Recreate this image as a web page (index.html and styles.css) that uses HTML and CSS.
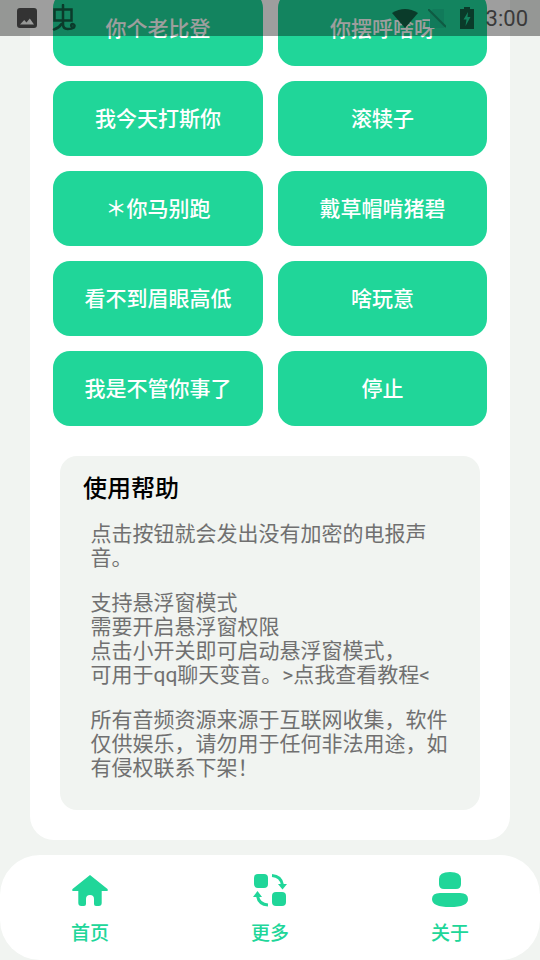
FILE: index.html
```html
<!DOCTYPE html>
<html lang="zh">
<head>
<meta charset="utf-8">
<title>电报音</title>
<link rel="stylesheet" href="styles.css">
</head>
<body>
<div class="screen">
  <main class="scroller">
    <section class="card">
      <div class="grid">
        <button class="btn">你个老比登</button>
        <button class="btn">你摆呼啥呀</button>
        <button class="btn">我今天打斯你</button>
        <button class="btn">滚犊子</button>
        <button class="btn">＊你马别跑</button>
        <button class="btn">戴草帽啃猪碧</button>
        <button class="btn">看不到眉眼高低</button>
        <button class="btn">啥玩意</button>
        <button class="btn">我是不管你事了</button>
        <button class="btn">停止</button>
      </div>
      <div class="help">
        <h2 class="help-title">使用帮助</h2>
        <p class="help-text">点击按钮就会发出没有加密的电报声<br>音。</p>
        <p class="help-text">支持悬浮窗模式<br>需要开启悬浮窗权限<br>点击小开关即可启动悬浮窗模式，<br>可用于qq聊天变音。&gt;点我查看教程&lt;</p>
        <p class="help-text">所有音频资源来源于互联网收集，软件<br>仅供娱乐，请勿用于任何非法用途，如<br>有侵权联系下架！</p>
      </div>
    </section>
  </main>
  <nav class="tabbar">
    <div class="tab">
      <svg class="tab-icon" viewBox="0 0 40 40"><path d="M20 4 L37.500 18 Q38.500 20 36.500 20 H31.700 V32 Q31.700 35 28.700 35 H26 Q24 35 24 33 V28 Q24 24 20 24 Q16 24 16 28 V33 Q16 35 14 35 H11.300 Q8.300 35 8.300 32 V20 H3.500 Q1.500 20 2.500 18 Z"/></svg>
      <span class="tab-label">首页</span>
    </div>
    <div class="tab">
      <svg class="tab-icon" viewBox="0 0 40 40"><rect x="4" y="3" width="14" height="14" rx="4"/><rect x="22" y="21" width="14" height="14" rx="4"/><path class="arrow" d="M22 4.500 Q31 5 32.500 14"/><path d="M28 13 H37 L32.500 18.500 Z"/><path class="arrow" d="M18 34 Q9 33.500 7.500 25"/><path d="M3 26 H12 L7.500 20 Z"/></svg>
      <span class="tab-label">更多</span>
    </div>
    <div class="tab">
      <svg class="tab-icon" viewBox="0 0 40 40"><path d="M9 8 Q9 1 20 1 Q31 1 31 8 V13 Q31 18 26 18 H14 Q9 18 9 13 Z"/><path d="M2 28 Q2 22 10 22 H30 Q38 22 38 28 Q38 36 20 36 Q2 36 2 28 Z"/></svg>
      <span class="tab-label">关于</span>
    </div>
  </nav>
  <header class="status">
    <div class="status-left">
      <svg class="pic" viewBox="0 0 20 20"><path d="M3 0 H17 Q20 0 20 3 V17 Q20 20 17 20 H3 Q0 20 0 17 V3 Q0 0 3 0 Z M3 16.500 H17 L12.800 10.500 L9.500 14.500 L7.200 12 Z" fill-rule="evenodd"/></svg>
      <svg class="bug" viewBox="0 0 24 28"><path d="M2.500 5.500 H19.500 V16.500 H2.500 Z M11 1 V20 Q11 25 15.500 25 Q20 25 22 23.500 Q23.500 20.500 20.500 20 Q18.500 20.500 19.500 22.500 M2 25.500 Q7 24 9.500 20" fill="none" stroke-width="2.500" stroke-linecap="round"/></svg>
    </div>
    <div class="status-right">
      <svg class="wifi" viewBox="0 0 26 20"><path d="M0 5 Q13 -3 26 5 L13 20 Z"/></svg>
      <svg class="nosim" viewBox="0 0 18 19"><path class="faint" d="M5 0 H16 V19 H2 V4 Z"/><path class="slash" d="M0 0 L18 18"/></svg>
      <svg class="batt" viewBox="0 0 14 22"><path fill-rule="evenodd" d="M4 0 H10 V2 H14 V22 H0 V2 H4 Z M8 5 L3.500 12.500 H6.500 L5.500 19 L10.500 10 H7.500 Z"/></svg>
      <span class="clock">3:00</span>
    </div>
  </header>
</div>
</body>
</html>
```
FILE: styles.css
```css
* { box-sizing: border-box; }
html, body { margin: 0; padding: 0; }
body {
  font-family: "Noto Sans CJK SC", "Noto Sans", sans-serif;
  background: #f1f4f1;
}
.screen {
  position: relative;
  width: 540px;
  height: 960px;
  overflow: hidden;
  background: #f1f4f1;
}
.scroller {
  height: 855px;
  padding: 0 30px 15px;
  display: flex;
  flex-direction: column;
  justify-content: flex-end;
  overflow: hidden;
}
.card {
  flex: none;
  background: #fff;
  border-radius: 24px;
  padding: 30px 23px 30px;
}
.grid {
  display: grid;
  grid-template-columns: 210px 209px;
  column-gap: 15px;
  row-gap: 15px;
}
.btn {
  height: 75px;
  border: 0;
  padding: 0 0 3px;
  border-radius: 17px;
  background: #20d699;
  color: #fff;
  font-family: inherit;
  font-size: 21px;
  font-weight: 500;
}
.help {
  margin: 30px 7px 0;
  padding: 13px 30px 27px 31px;
  background: #f1f4f1;
  border-radius: 17px;
  height: 354px;
}
.help-title {
  margin: 0 0 17px -8px;
  font-size: 24px;
  line-height: 36px;
  font-weight: 500;
  color: #000;
}
.help-text {
  margin: 0 0 21px -0.500px;
  font-family: Roboto, "Noto Sans CJK SC", sans-serif;
  font-size: 21px;
  line-height: 24px;
  color: #707070;
  white-space: nowrap;
}
.tabbar {
  height: 105px;
  background: #fff;
  border-radius: 40px;
  display: grid;
  grid-template-columns: repeat(3, 180px);
}
.tab {
  display: flex;
  flex-direction: column;
  align-items: center;
  padding-top: 16px;
}
.tab-icon {
  width: 40px;
  height: 40px;
  fill: #20d699;
}
.arrow {
  fill: none;
  stroke: #20d699;
  stroke-width: 3;
}
.tab-label {
  margin-top: 6px;
  font-size: 19px;
  line-height: 30px;
  font-weight: 500;
  color: #20d699;
}
.status {
  position: absolute;
  left: 0;
  top: 0;
  width: 540px;
  height: 36px;
  background: rgba(0, 0, 0, .38);
  display: flex;
  justify-content: space-between;
  align-items: center;
  padding: 0 12px 0 17px;
}
.status-left, .status-right { display: flex; align-items: center; }
.pic { width: 20px; height: 20px; fill: #333; }
.bug {
  width: 24px;
  height: 28px;
  margin-left: 15px;
  stroke: #0b3b2b;
}
.wifi { width: 26px; height: 20px; fill: #0a3b2a; }
.nosim { width: 18px; height: 19px; margin-left: 10px; }
.faint { fill: #117a5a; }
.slash { stroke: #0f5a43; stroke-width: 2; }
.batt { width: 14px; height: 22px; margin-left: 14px; fill: #0a3b2a; }
.clock {
  margin-left: 12px;
  font-family: Roboto, sans-serif;
  font-size: 22px;
  color: #3a3a3a;
}
```
